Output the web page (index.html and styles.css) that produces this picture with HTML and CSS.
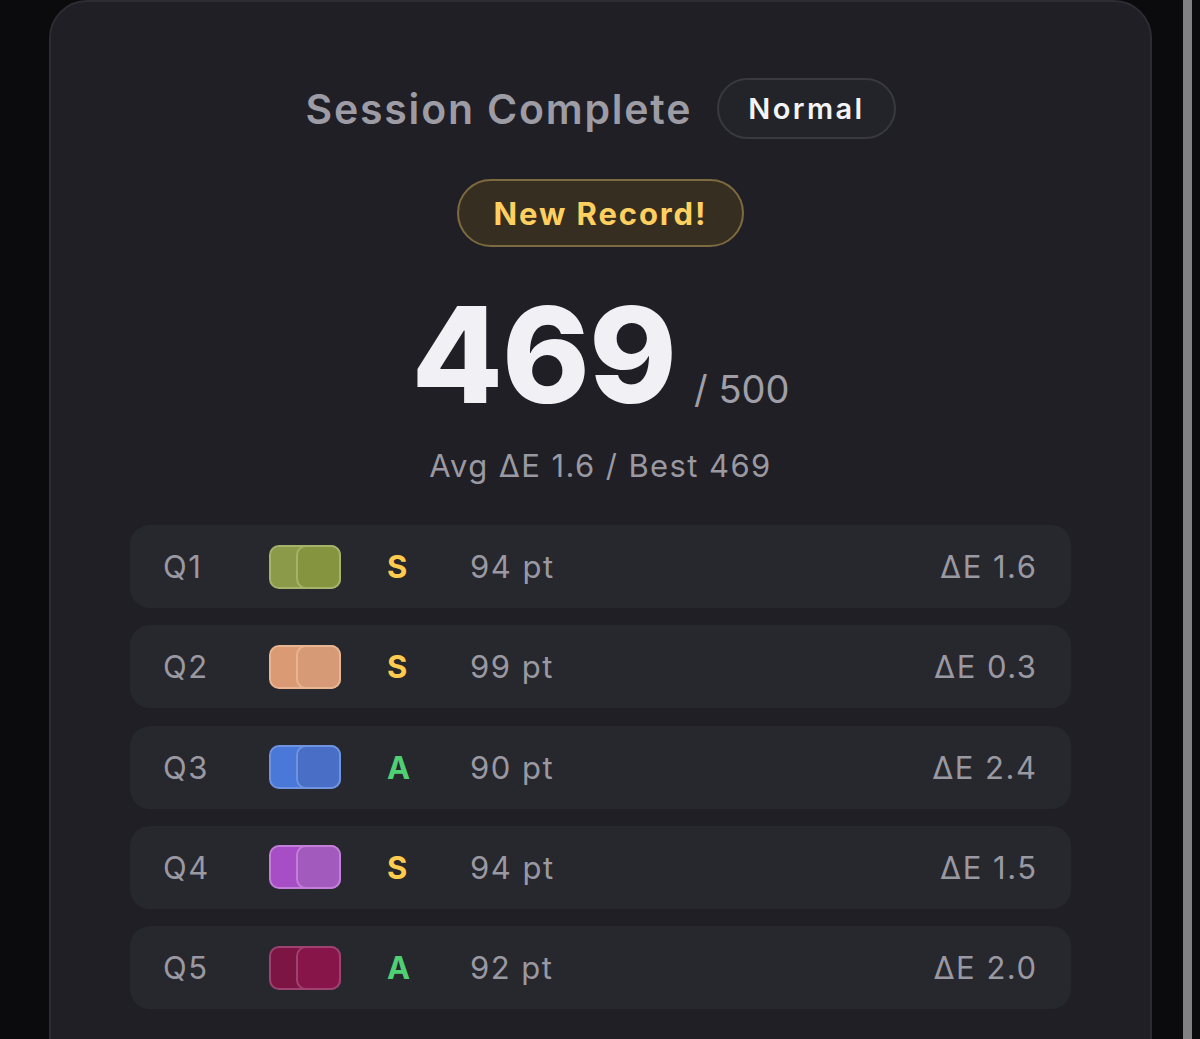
FILE: index.html
```html
<!DOCTYPE html>
<html lang="en">
<head>
    <meta charset="UTF-8">
    <meta name="viewport" content="width=device-width, initial-scale=1.0">
    <title>Session Complete</title>
    <link rel="stylesheet" href="styles.css">
</head>
<body>
    <div class="page">
        <div class="card">
            <div class="header">
                <h1 class="title">Session Complete</h1>
                <span class="mode">Normal</span>
            </div>

            <div class="record">New Record!</div>

            <div class="score">
                <span class="score-value">469</span>
                <span class="score-max">/ 500</span>
            </div>

            <p class="summary">Avg ΔE 1.6 / Best 469</p>

            <div class="rounds">
                <div class="round">
                    <span class="round-no">Q1</span>
                    <span class="swatch" style="background:#8a9a48;border-color:#a4b36a">
                        <span class="swatch-guess" style="background:#85953f;border-color:#a4b36a"></span>
                    </span>
                    <span class="grade grade-s">S</span>
                    <span class="points">94 pt</span>
                    <span class="delta">ΔE 1.6</span>
                </div>
                <div class="round">
                    <span class="round-no">Q2</span>
                    <span class="swatch" style="background:#d99a74;border-color:#e8b491">
                        <span class="swatch-guess" style="background:#d69b76;border-color:#e8b491"></span>
                    </span>
                    <span class="grade grade-s">S</span>
                    <span class="points">99 pt</span>
                    <span class="delta">ΔE 0.3</span>
                </div>
                <div class="round">
                    <span class="round-no">Q3</span>
                    <span class="swatch" style="background:#4a78d8;border-color:#6f93e0">
                        <span class="swatch-guess" style="background:#486ec6;border-color:#6f93e0"></span>
                    </span>
                    <span class="grade grade-a">A</span>
                    <span class="points">90 pt</span>
                    <span class="delta">ΔE 2.4</span>
                </div>
                <div class="round">
                    <span class="round-no">Q4</span>
                    <span class="swatch" style="background:#a74ec6;border-color:#c27ed8">
                        <span class="swatch-guess" style="background:#a25abd;border-color:#c27ed8"></span>
                    </span>
                    <span class="grade grade-s">S</span>
                    <span class="points">94 pt</span>
                    <span class="delta">ΔE 1.5</span>
                </div>
                <div class="round">
                    <span class="round-no">Q5</span>
                    <span class="swatch" style="background:#7c1444;border-color:#9e426f">
                        <span class="swatch-guess" style="background:#88154a;border-color:#9e426f"></span>
                    </span>
                    <span class="grade grade-a">A</span>
                    <span class="points">92 pt</span>
                    <span class="delta">ΔE 2.0</span>
                </div>
            </div>
        </div>
        <div class="rail"></div>
    </div>
</body>
</html>
```

FILE: styles.css
```css
* {
    box-sizing: border-box;
}

html, body {
    margin: 0;
    height: 100%;
    overflow: hidden;
}

body {
    font-family: 'Inter', 'Noto Sans', sans-serif;
    background: #0b0b0e;
    color: #9c9ba4;
}

.page {
    display: flex;
    height: 100%;
    padding-left: 49px;
}

.card {
    width: 1103px;
    height: 1100px;
    background: #1f1f25;
    border: 2px solid #2c2c33;
    border-radius: 38px;
    padding: 76px 79px 0;
    display: flex;
    flex-direction: column;
    align-items: center;
}

.rail {
    width: 9px;
    height: 100%;
    margin-left: 31px;
    background: #818184;
}

/* header */
.header {
    display: flex;
    align-items: center;
    gap: 25px;
}

.title {
    margin: 0;
    font-size: 41px;
    font-weight: 600;
    letter-spacing: 1.8px;
    color: #9d9ca5;
}

.mode {
    height: 61px;
    padding: 0 29px;
    display: flex;
    align-items: center;
    border: 2px solid #393941;
    border-radius: 31px;
    background: #23232a;
    color: #f4f4f7;
    font-size: 29px;
    font-weight: 600;
    letter-spacing: 2.4px;
}

.record {
    margin-top: 40px;
    height: 68px;
    padding: 0 35px;
    display: flex;
    align-items: center;
    border: 2px solid #7d6b3f;
    border-radius: 34px;
    background: #362f21;
    color: #ffcf5f;
    font-size: 31px;
    font-weight: 700;
    letter-spacing: 1.9px;
}

/* score */
.score {
    margin-top: 42px;
    display: flex;
    align-items: baseline;
    line-height: 132px;
}

.score-value {
    font-size: 133px;
    font-weight: 800;
    color: #f1f0f5;
    letter-spacing: -1px;
}

.score-max {
    margin-left: 18px;
    font-size: 38px;
    color: #a09fa8;
}

.summary {
    margin: -7px 0 0;
    font-size: 31px;
    line-height: 36px;
    color: #9a99a2;
    letter-spacing: 1.4px;
}

/* rounds */
.rounds {
    margin-top: 41px;
    width: 100%;
    display: flex;
    flex-direction: column;
    gap: 17.3px;
}

.round {
    height: 83px;
    display: flex;
    align-items: center;
    padding: 0 35px 0 33px;
    background: #27272e;
    border-radius: 20px;
    font-size: 31px;
    color: #9a99a2;
    letter-spacing: 1.5px;
}

.round-no {
    width: 106px;
}

.swatch {
    position: relative;
    width: 72px;
    height: 44px;
    border: 2px solid;
    border-radius: 10px;
}

.swatch-guess {
    position: absolute;
    top: -2px;
    right: -2px;
    width: 45px;
    height: 44px;
    border: 2px solid;
    border-radius: 10px;
}

.grade {
    margin-left: 46px;
    width: 83px;
    font-weight: 700;
    letter-spacing: 0;
}

.grade-s {
    color: #ffcc4f;
}

.grade-a {
    color: #4fd073;
}

.points {
    flex: 1;
}

.delta {
    margin-right: -1.5px;
}
```
